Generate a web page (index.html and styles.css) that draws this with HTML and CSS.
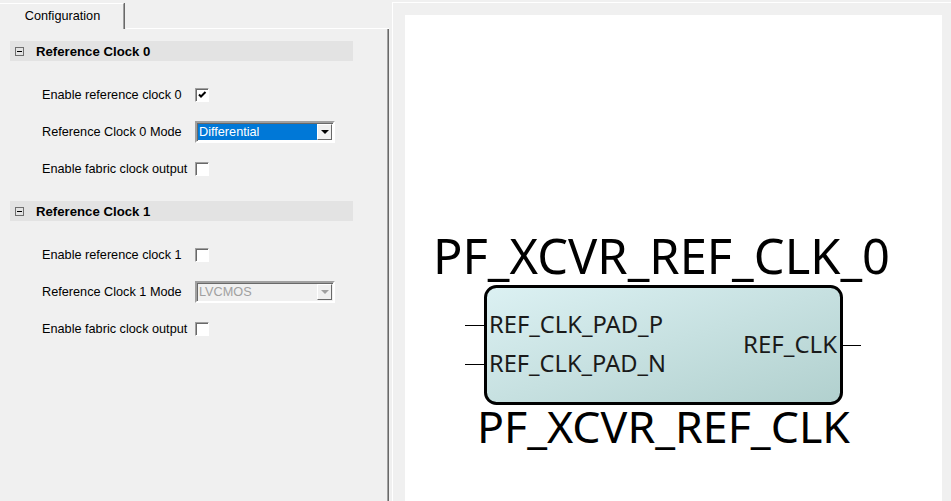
FILE: index.html
```html
<!DOCTYPE html>
<html lang="en">
<head>
  <meta charset="UTF-8" />
  <title>PF_XCVR_REF_CLK Configurator</title>
  <link rel="stylesheet" href="styles.css">
</head>
<body>
  <div class="app">
    <div class="left">
      <div class="tabs">
        <div class="tab">Configuration</div>
        <div class="tab-rest"></div>
      </div>

      <div class="pane">
        <section class="group">
          <div class="group-head"><span class="toggle"></span>Reference Clock 0</div>
          <div class="rows">
            <div class="row">
              <label>Enable reference clock 0</label>
              <span class="check">
                <svg width="9" height="9" viewBox="0 0 9 9"><path d="M1 3.5 L3 5.5 L7.5 1" fill="none" stroke="#000" stroke-width="2"/></svg>
              </span>
            </div>
            <div class="row">
              <label>Reference Clock 0 Mode</label>
              <div class="combo">
                <span class="combo-value selected">Differential</span>
                <span class="combo-btn"><span class="arrow"></span></span>
              </div>
            </div>
            <div class="row">
              <label>Enable fabric clock output</label>
              <span class="check"></span>
            </div>
          </div>
        </section>

        <section class="group">
          <div class="group-head"><span class="toggle"></span>Reference Clock 1</div>
          <div class="rows">
            <div class="row">
              <label>Enable reference clock 1</label>
              <span class="check"></span>
            </div>
            <div class="row">
              <label>Reference Clock 1 Mode</label>
              <div class="combo disabled">
                <span class="combo-value">LVCMOS</span>
                <span class="combo-btn"><span class="arrow"></span></span>
              </div>
            </div>
            <div class="row">
              <label>Enable fabric clock output</label>
              <span class="check"></span>
            </div>
          </div>
        </section>
      </div>
    </div>

    <div class="right">
      <div class="canvas">
        <svg class="diagram" width="537" height="486" viewBox="0 0 537 486">
          <defs>
            <linearGradient id="body" x1="0" y1="0" x2="1" y2="1">
              <stop offset="0" stop-color="#dcf1f3"/>
              <stop offset="1" stop-color="#b1d0ce"/>
            </linearGradient>
          </defs>
          <text class="title" x="28" y="259" font-size="50" textLength="457" lengthAdjust="spacingAndGlyphs">PF_XCVR_REF_CLK_0</text>

          <line x1="60" y1="310.5" x2="81" y2="310.5" stroke="#000" stroke-width="1"/>
          <line x1="60" y1="349.5" x2="81" y2="349.5" stroke="#000" stroke-width="1"/>
          <line x1="436" y1="330.5" x2="456" y2="330.5" stroke="#000" stroke-width="1"/>
          <rect x="80.5" y="271.5" width="356" height="117" rx="11" fill="url(#body)" stroke="#000" stroke-width="3"/>

          <text class="pin" x="84" y="318" font-size="23" textLength="174" lengthAdjust="spacingAndGlyphs">REF_CLK_PAD_P</text>
          <text class="pin" x="84" y="357" font-size="23" textLength="177" lengthAdjust="spacingAndGlyphs">REF_CLK_PAD_N</text>
          <text class="pin" x="338" y="338" font-size="23" textLength="94" lengthAdjust="spacingAndGlyphs">REF_CLK</text>

          <text class="title" x="72" y="428" font-size="43" textLength="373" lengthAdjust="spacingAndGlyphs">PF_XCVR_REF_CLK</text>
        </svg>
      </div>
    </div>
  </div>
</body>
</html>
```

FILE: styles.css
```css
:root {
  --bg: #f0f0f0;
  --head-bg: #e3e3e3;
  --edge-light: #ffffff;
  --edge-mid: #a0a0a0;
  --edge-dark: #696969;
  --select: #0078d7;
  --disabled: #a0a0a0;
}

html, body {
  margin: 0;
  padding: 0;
  height: 100%;
  background: var(--bg);
  color: #000;
  font-family: "Liberation Sans", Arial, sans-serif;
  font-size: 12.7px;
  overflow: hidden;
}

.app {
  display: flex;
  height: 100vh;
}

/* left: configuration tab */

.left {
  width: 389px;
  display: flex;
  flex-direction: column;
  flex-shrink: 0;
}

.tabs {
  display: flex;
  height: 29px;
}

.tab {
  width: 124px;
  margin-top: 3px;
  border-top: 1px solid var(--edge-light);
  border-right: 1px solid var(--edge-mid);
  box-shadow: 1px 0 0 var(--edge-dark);
  display: flex;
  align-items: center;
  justify-content: center;
  padding-left: 2px;
  padding-bottom: 1px;
  box-sizing: border-box;
}

.tab-rest {
  flex: 1;
  margin-left: 2px;
  border-bottom: 1px solid var(--edge-light);
}

.pane {
  flex: 1;
  padding: 12px 0 0 10px;
  border-right: 1px solid var(--edge-dark);
  box-shadow: inset -1px 0 0 var(--edge-mid);
}

.group {
  width: 343px;
  margin-bottom: 14px;
}

.group-head {
  height: 20px;
  background: var(--head-bg);
  display: flex;
  align-items: center;
  padding-left: 5px;
  font-weight: bold;
  font-size: 13.2px;
}

.toggle {
  width: 7px;
  height: 7px;
  border: 1px solid #6e6e6e;
  margin-right: 12px;
  position: relative;
}

.toggle::after {
  content: "";
  position: absolute;
  left: 1px;
  right: 1px;
  top: 3px;
  height: 1px;
  background: #000;
}

.rows {
  margin-top: 15px;
  padding-left: 32px;
}

.row {
  height: 37px;
  display: grid;
  grid-template-columns: 153px auto;
  align-items: center;
}

.check {
  width: 11px;
  height: 11px;
  background: #fff;
  border: 1px solid;
  border-color: var(--edge-mid) var(--edge-light) var(--edge-light) var(--edge-mid);
  box-shadow: inset 1px 1px 0 var(--edge-dark);
  display: flex;
  align-items: center;
  justify-content: center;
  padding: 1px 0 0 1px;
}

.combo {
  width: 134px;
  height: 17px;
  border: 2px solid;
  border-color: var(--edge-mid) var(--edge-light) var(--edge-light) var(--edge-mid);
  box-shadow: inset 1px 1px 0 var(--edge-dark);
  background: #fff;
  display: flex;
  padding: 1px 1px 0 1px;
  box-sizing: content-box;
}

.combo-value {
  flex: 1;
  padding-left: 1px;
  line-height: 16px;
  margin: 0 0 1px 0;
}

.combo-value.selected {
  background: var(--select);
  color: #fff;
}

.combo-btn {
  width: 13px;
  height: 14px;
  border: 1px solid;
  border-color: var(--edge-light) var(--edge-dark) var(--edge-dark) var(--edge-light);
  background: var(--bg);
  display: flex;
  align-items: center;
  justify-content: center;
}

.arrow {
  width: 0;
  height: 0;
  border-left: 4px solid transparent;
  border-right: 4px solid transparent;
  border-top: 4px solid #000;
}

.combo.disabled {
  background: var(--bg);
}

.combo.disabled .combo-value {
  color: var(--disabled);
}

.combo.disabled .arrow {
  border-top-color: var(--disabled);
}

/* right: symbol preview */

.right {
  flex: 1;
  margin: 2px 0 0 3px;
  border-left: 1px solid var(--edge-light);
  border-top: 1px solid var(--edge-light);
  padding: 12px 9px 0 12px;
  display: flex;
}

.canvas {
  flex: 1;
  background: #fff;
  overflow: hidden;
}

.diagram {
  display: block;
}

.diagram text {
  font-family: "Noto Sans", "Liberation Sans", sans-serif;
}

.diagram .title {
  fill: #000;
}

.diagram .pin {
  fill: #1a1a1a;
}
```
